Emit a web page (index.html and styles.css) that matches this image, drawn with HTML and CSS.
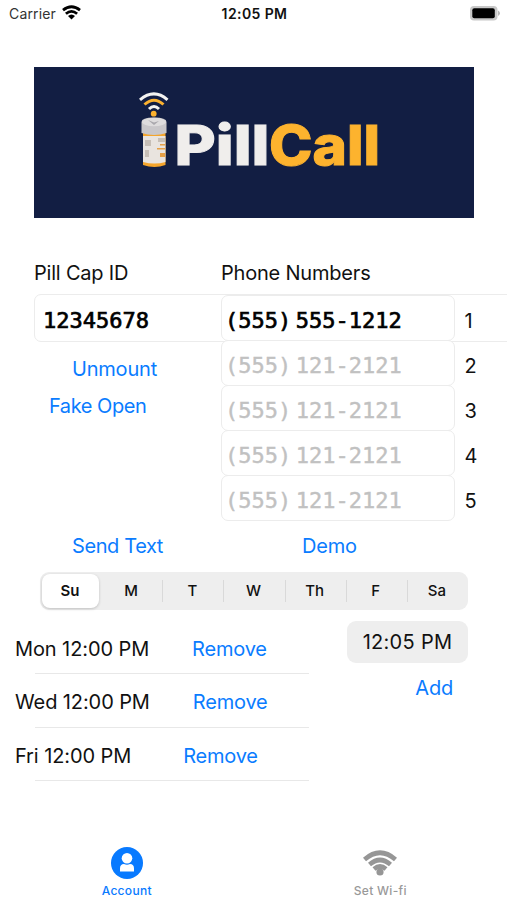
FILE: index.html
```html
<!DOCTYPE html>
<html lang="en">
<head>
<meta charset="utf-8">
<title>PillCall</title>
<link rel="stylesheet" href="styles.css">
</head>
<body>
<div class="app">
  <header class="status">
    <div class="carrier"><span>Carrier</span>
      <svg width="19" height="15" viewBox="0 0 19 15" fill="none" stroke="#000" stroke-width="2.8"><path d="M1 5.200Q9.500-1.600 18 5.200"/><path d="M3.900 8.700Q9.500 4 15.100 8.700"/><path d="M6 11Q9.500 8 13 11L9.500 14.400Z" fill="#000" stroke="none"/></svg>
    </div>
    <span class="clock">12:05 PM</span>
    <svg class="battery" width="31" height="16" viewBox="0 0 31 16"><rect x="1" y="1" width="27.500" height="14.500" rx="4" fill="#c8c8c8"/><rect x="3.300" y="3.300" width="22.500" height="10" rx="2" fill="#000"/><path d="M29 5.500Q31 6.500 31 8.200T29 10.900Z" fill="#b8b8b8"/></svg>
  </header>

  <svg class="banner" width="440" height="151" viewBox="0 0 440 151">
    <rect width="440" height="151" fill="#121e43"/>
    <g fill="none" stroke-width="3">
      <path d="M106 32.800Q120 21 133.500 32.800" stroke="#f4f3f1"/>
      <path d="M110.500 37.500Q120 29 129.500 37.500" stroke="#fbb12f"/>
      <path d="M115 42Q120 37 125 42" stroke="#f4f3f1"/>
    </g>
    <circle cx="119.700" cy="46.700" r="2.900" fill="#fbb12f"/>
    <path d="M109 66h22.500v32q-11 4-22.500 0z" fill="#f4a52c"/>
    <path d="M109 69h22.500v26q-11 3-22.500 0z" fill="#e9e4df"/>
    <path d="M111 73h6v6h-6zM124 71h7v4h-7zM111 83h4v7h-4z" fill="#c7bfb6"/>
    <path d="M126 77h5v1.500h-5zM123 81h8v1.500h-8zM126 86h5v4h-5z" fill="#e6a046"/>
    <path d="M107.500 55q0-4.500 12.500-4.500t12.500 4.500v11q-12.500 4-25 0z" fill="#c9c7ca"/>
    <ellipse cx="120" cy="55" rx="12" ry="4.200" fill="#dedcdd"/>
    <path d="M114 53l6 5 5-4-5 1.500z" fill="#aaa8ad"/>
    <g class="wordmark"><text x="140.500" y="98" textLength="95" lengthAdjust="spacingAndGlyphs" fill="#f0eeec" stroke="#f0eeec">Pill</text><text x="235" y="98" textLength="111" lengthAdjust="spacingAndGlyphs" fill="#fdb32e" stroke="#fdb32e">Call</text></g>
  </svg>

  <main>
    <section class="contacts">
      <div class="cap">
        <h2>Pill Cap ID</h2>
        <div class="field cap-id">12345678</div>
        <a class="unmount">Unmount</a>
        <a class="fake">Fake Open</a>
      </div>
      <div class="phones">
        <h2>Phone Numbers</h2>
        <div class="phone"><div class="field filled">(555) 555-1212</div><span>1</span></div>
        <div class="phone"><div class="field">(555) 121-2121</div><span>2</span></div>
        <div class="phone"><div class="field">(555) 121-2121</div><span>3</span></div>
        <div class="phone"><div class="field">(555) 121-2121</div><span>4</span></div>
        <div class="phone"><div class="field">(555) 121-2121</div><span>5</span></div>
      </div>
    </section>

    <div class="actions"><a class="send">Send Text</a><a class="demo">Demo</a></div>

    <div class="days"><span class="on">Su</span><span>M</span><span>T</span><span>W</span><span>Th</span><span>F</span><span>Sa</span></div>

    <section class="schedule">
      <div class="alarms">
        <div class="alarm"><span class="mon">Mon 12:00 PM</span><a>Remove</a></div>
        <div class="alarm"><span class="wed">Wed 12:00 PM</span><a>Remove</a></div>
        <div class="alarm"><span class="fri">Fri 12:00 PM</span><a>Remove</a></div>
      </div>
      <div class="picker"><div class="time">12:05 PM</div><a>Add</a></div>
    </section>
  </main>

  <nav>
    <div class="tab active">
      <svg width="34" height="34" viewBox="0 0 34 34"><circle cx="17" cy="17" r="16" fill="#087aff"/><circle cx="17" cy="12.200" r="5.300" fill="#fff"/><path d="M10 25.500v-3q0-4.500 4-4.500 3 1.300 6 0 4 0 4 4.500v3z" fill="#fff"/></svg>
      <span>Account</span>
    </div>
    <div class="tab">
      <svg width="34" height="34" viewBox="0 0 34 34" fill="none" stroke="#969696" stroke-width="4.600"><path d="M1.500 13.500Q17 0 32.500 13.500"/><path d="M6.500 18.500Q17 9.500 27.500 18.500"/><path d="M11 23Q17 18 23 23"/><circle cx="17" cy="26" r="3.600" fill="#969696" stroke="none"/></svg>
      <span>Set Wi-fi</span>
    </div>
  </nav>
</div>
</body>
</html>
```
FILE: styles.css
```css
* { box-sizing: border-box; }
body { margin: 0; background: #fff; color: #111; font: 20px/24px Inter, "Liberation Sans", sans-serif; overflow: hidden; }
.app { width: 507px; height: 900px; overflow: hidden; display: flex; flex-direction: column; }
svg { display: block; flex: none; }
a { color: #0a7cff; letter-spacing: -.2px; }
h2 { margin: 0; font-size: 20px; font-weight: 400; line-height: 24px; white-space: nowrap; letter-spacing: -.2px; }

.status { height: 67px; flex: none; display: grid; grid-template-columns: 1fr auto 1fr; align-items: start; padding: 5px 7px 0 9px; font-size: 14px; line-height: 18px; }
.carrier { display: flex; gap: 6px; color: #333; letter-spacing: .15px; }
.clock { font-weight: 600; letter-spacing: .4px; }
.battery { justify-self: end; }

.banner { margin-left: 34px; }
.wordmark { font-family: Inter, sans-serif; font-size: 55px; font-weight: 800; stroke-width: 1; }

.contacts { display: grid; grid-template-columns: 187px 1fr; margin: 43px 0 0 34px; height: 273px; }
.cap { display: flex; flex-direction: column; align-items: flex-start; }
.field { font: 22px/49px "DejaVu Sans Mono", monospace; border: 1px solid #ececec; border-radius: 7px; background: #fff; white-space: nowrap; color: #c1c1c1; -webkit-text-stroke: .4px currentColor; padding-left: 3px; word-spacing: -8.6px; }
.cap-id { width: 500px; height: 48px; margin-top: 9px; padding-left: 8px; line-height: 51px; color: #000; flex: none; -webkit-text-stroke-width: .7px; }
.unmount { margin: 15px 0 0 38px; }
.fake { margin: 13px 0 0 15px; letter-spacing: -.45px; }
.phones { position: relative; }
.phones h2 { margin-bottom: 10px; }
.phone { display: flex; align-items: center; height: 45.200px; }
.phone .field { width: 233.500px; height: 46.200px; }
.phone .filled { color: #000; -webkit-text-stroke-width: .7px; }
.phone span { margin: 6px 0 0 10px; }

.actions { display: flex; padding: 0 0 0 72px; height: 24px; }
.send { letter-spacing: -.4px; }
.demo { margin-left: 139px; }

.days { width: 428px; height: 38px; margin: 14px 0 0 40px; border-radius: 9px; background: #eee; display: grid; grid-template-columns: repeat(7, 1fr); align-items: center; font-size: 15px; font-weight: 500; }
.days span { display: flex; align-items: center; justify-content: center; height: 22px; padding-right: 2px; border-left: 1px solid #d9d9d9; }
.days .on { height: 34px; margin: 0 2px; padding: 0 1px 0 0; background: #fff; border: 0; border-radius: 8px; box-shadow: 0 1px 3px #0003; font-weight: 600; }
.days .on + span { border-color: transparent; }

.schedule { display: flex; justify-content: space-between; margin: 11px 39px 0 15px; }
.alarm { display: flex; height: 53.300px; padding-top: 16px; background: linear-gradient(#e8e8e8, #e8e8e8) 20px 100% / 274px 1px no-repeat; width: 295px; letter-spacing: -.1px; }
.alarm a { margin-left: 43px; }
.alarm .fri + a { margin-left: 52px; }
.picker { display: flex; flex-direction: column; align-items: flex-end; }
.time { width: 121px; height: 42px; border-radius: 9px; background: #eee; text-align: center; line-height: 42px; letter-spacing: .3px; }
.picker a { margin: 13px 15px 0 0; }

nav { display: grid; grid-template-columns: 1fr 1fr; margin-top: auto; height: 54px; }
.tab { display: flex; flex-direction: column; align-items: center; font-size: 12px; line-height: 16px; color: #999; font-weight: 500; letter-spacing: .3px; }
.tab span { margin-top: 3px; }
.active { color: #087aff; }
```
